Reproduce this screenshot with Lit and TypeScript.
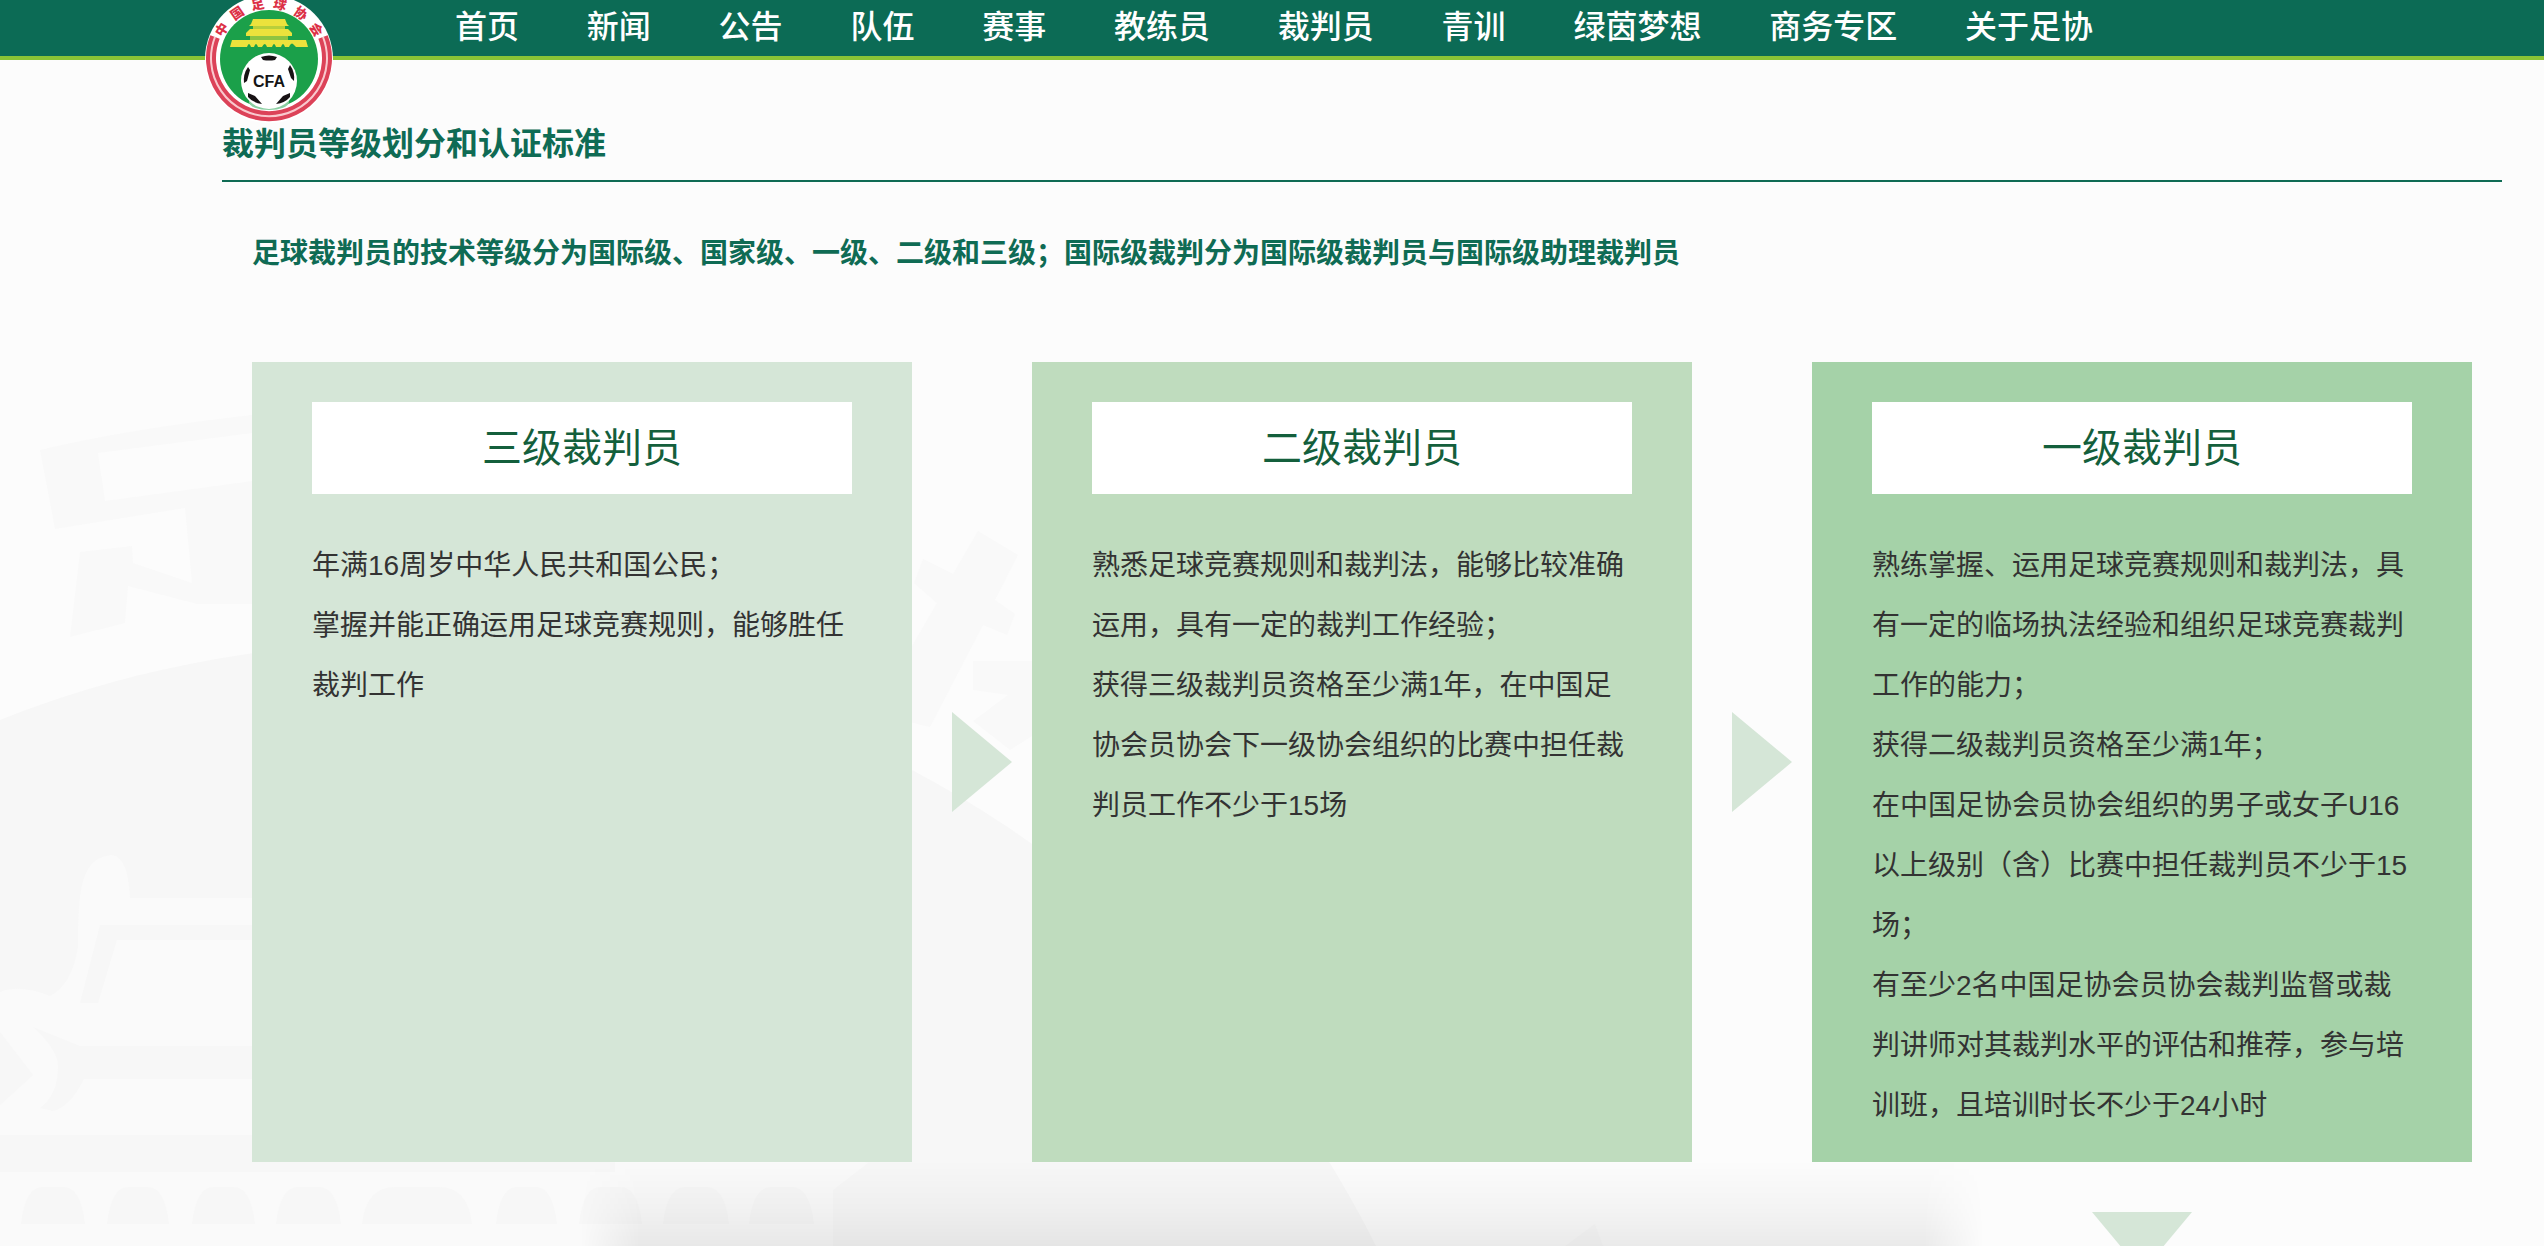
import { LitElement, html, svg, css } from "lit";
import { customElement, property } from "lit/decorators.js";

interface Level {
  name: string;
  tone: string;
  rules: string[];
}

const NAV = ["首页", "新闻", "公告", "队伍", "赛事", "教练员", "裁判员", "青训", "绿茵梦想", "商务专区", "关于足协"];

const LEVELS: Level[] = [
  {
    name: "三级裁判员",
    tone: "light",
    rules: ["年满16周岁中华人民共和国公民；", "掌握并能正确运用足球竞赛规则，能够胜任裁判工作"],
  },
  {
    name: "二级裁判员",
    tone: "medium",
    rules: [
      "熟悉足球竞赛规则和裁判法，能够比较准确运用，具有一定的裁判工作经验；",
      "获得三级裁判员资格至少满1年，在中国足协会员协会下一级协会组织的比赛中担任裁判员工作不少于15场",
    ],
  },
  {
    name: "一级裁判员",
    tone: "strong",
    rules: [
      "熟练掌握、运用足球竞赛规则和裁判法，具有一定的临场执法经验和组织足球竞赛裁判工作的能力；",
      "获得二级裁判员资格至少满1年；",
      "在中国足协会员协会组织的男子或女子U16以上级别（含）比赛中担任裁判员不少于15场；",
      "有至少2名中国足协会员协会裁判监督或裁判讲师对其裁判水平的评估和推荐，参与培训班，且培训时长不少于24小时",
    ],
  },
];

@customElement("cfa-logo")
export class CfaLogo extends LitElement {
  static styles = css`
    :host { display: block; }
    svg { display: block; width: 128px; height: 128px; }
    .ring-text { font: 900 13px "Noto Sans CJK SC", sans-serif; fill: #dc3046; text-anchor: middle; }
    .ball-text { font: bold 16px "Liberation Sans", Arial, sans-serif; fill: #151515; text-anchor: middle; }
  `;

  render() {
    return html`
      <svg viewBox="0 0 128 128" role="img" aria-label="中国足球协会">
        <circle cx="64" cy="64" r="64" fill="#fff" />
        <path d="M10 42 A58 58 0 1 0 118 42" fill="none" stroke="#dc4258" stroke-width="10" />
        <path d="M10 42 A58 58 0 1 0 118 42" fill="none" stroke="#f9c9ce" stroke-width="2" />
        ${["中", "国", "足", "球", "协", "会"].map(
          (ch, i) => svg`<text class="ring-text" x="64" y="13" transform="rotate(${-58 + i * 23.2} 64 64)">${ch}</text>`
        )}
        <circle cx="64" cy="64" r="49" fill="#1ba04a" />
        <g fill="#ece23c">
          <path d="M48 24 L80 24 L82 29 L84 31 L44 31 L46 29 Z" />
          <rect x="48" y="31" width="32" height="3" fill="#b9cf3b" />
          <path d="M45 34 L83 34 L87 38 L87 41 L41 41 L41 38 Z" />
          <rect x="45" y="41" width="38" height="4" fill="#8fc441" />
          <path d="M27 45 L101 45 L103 52 L91 52 L89 50 Q87 47 85 50 L84 52 L80 52 Q78 46 76 52 L71 52 Q69 46 67 52 L62 52 Q60 46 57 52 L53 52 Q51 46 49 52 L46 52 Q44 46 42 52 L25 52 Z" />
        </g>
        <ellipse cx="64" cy="107" rx="20" ry="8" fill="#8bcfa2" />
        <circle cx="64" cy="86" r="28" fill="#fff" />
        <g fill="#171214">
          <path d="M56 62 Q64 59 72 62 L70 65 Q64 66 58 65 Z" />
          <path d="M43 72 Q38 79 39 88 L42 86 L45 75 Z" />
          <path d="M85 70 Q90 77 89 86 L86 83 L83 74 Z" />
          <path d="M43 98 L50 101 L57 109 Q48 108 43 102 Z" />
          <path d="M85 98 L78 101 L71 109 Q80 108 85 102 Z" />
        </g>
        <text class="ball-text" x="64" y="92">CFA</text>
      </svg>
    `;
  }
}

@customElement("site-header")
export class SiteHeader extends LitElement {
  static styles = css`
    :host { display: block; position: relative; z-index: 2; background: #0c6b55; border-bottom: 4px solid #8ac436; }
    .logo { position: absolute; left: 205px; top: -5px; }
    nav { padding-left: 425px; font: 28px/54px "Liberation Sans", Arial, "Noto Sans CJK SC", sans-serif; white-space: nowrap; }
    a {
      display: inline-block;
      padding: 0 30px;
      color: #fff;
      text-decoration: none;
      font-size: 32px;
      font-weight: 500;
    }
  `;

  render() {
    return html`
      <nav aria-label="主导航">${NAV.map((label) => html`<a href="#">${label}</a> `)}</nav>
      <cfa-logo class="logo"></cfa-logo>
    `;
  }
}

@customElement("level-card")
export class LevelCard extends LitElement {
  @property({ attribute: false }) level!: Level;

  static styles = css`
    :host { display: block; flex: 1; min-width: 0; }
    .card { box-sizing: border-box; height: 100%; min-height: 800px; padding: 40px 60px 26px; }
    .light { background: #d5e6d7; }
    .medium { background: #bfdcbe; }
    .strong { background: #a5d2a8; }
    h3 {
      margin: 0 0 42px;
      background: #fff;
      color: #145f3c;
      font-size: 40px;
      line-height: 92px;
      font-weight: 400;
      text-align: center;
    }
    p { margin: 0; color: #333; font-size: 28px; line-height: 60px; }
  `;

  render() {
    return html`
      <article class="card ${this.level.tone}">
        <h3>${this.level.name}</h3>
        ${this.level.rules.map((rule) => html`<p>${rule}</p>`)}
      </article>
    `;
  }
}

@customElement("page-watermark")
export class PageWatermark extends LitElement {
  static styles = css`
    :host { display: block; }
    svg { display: block; width: 1700px; height: 1300px; }
  `;

  render() {
    const arches = [
      [21, 85], [107, 169], [192, 255], [276, 341], [362, 472],
      [496, 557], [579, 642], [663, 729], [749, 814],
    ];
    return html`
      <svg viewBox="0 0 1700 1300" aria-hidden="true">
        <g fill="#f9f9f9">
          <path fill-rule="evenodd" d="M40 450 Q145 425 300 410 V604 H197 L128 586 L125 623 L70 637 L80 552 L132 546 L133 563 L192 583 L185 508 L55 529 Z M98 453 L105 501 L260 480 V432 Z" />
          <path d="M914 583 L923 559 L953 574 L978 531 L1018 555 L995 600 L1015 614 L1007 635 L983 625 L930 727 L880 715 L912 646 L937 603 Z" />
          <path d="M973 661 H1060 V730 L1032 736 L1010 750 L973 721 L1008 695 L973 690 Z" />
          <path d="M1540 1265 L1595 1224 L1610 1265 Z" />
        </g>
        <circle cx="402" cy="1731" r="1088" fill="#f7f7f7" />
        <path fill="#fafafa" d="M0 992 Q20 984 50 996 Q72 985 78 947 C78 885 82 858 112 855 Q128 857 130 898 H700 V1120 L868 1163 L833 1190 V1300 H0 Z" />
        <g fill="#f7f7f7">
          <path d="M100 925 H300 V940 H117 L98 1003 H80 Z" />
          <path d="M33 1027 L80 1046 H300 V1079 H84 Q70 1107 53 1111 L40 1108 Q58 1095 58 1066 Q58 1050 33 1027 Z" />
          <path d="M0 1032 L33 1075 L0 1105 Z" />
          <rect x="0" y="1135" width="615" height="37" />
          ${arches.map(([a, b]) => {
            const q = (b - a) / 4;
            return svg`<path d="M${a} 1224 Q${a + 4} 1187 ${a + q + 6} 1187 H${b - q - 6} Q${b - 4} 1187 ${b} 1224 Z" />`;
          })}
        </g>
      </svg>
    `;
  }
}

@customElement("app-root")
export class AppRoot extends LitElement {
  static styles = css`
    :host {
      display: block;
      position: relative;
      height: 100vh;
      overflow: hidden;
      background: #fcfcfc;
      font-family: "Liberation Sans", Arial, "Noto Sans CJK SC", sans-serif;
    }
    .watermark { position: absolute; left: 0; top: 0; }
    .shade {
      position: absolute;
      left: 580px;
      right: 560px;
      bottom: 0;
      height: 86px;
      background: linear-gradient(to top, rgba(0, 0, 0, 0.07), rgba(0, 0, 0, 0.03) 45%, transparent);
      -webkit-mask-image: linear-gradient(to right, transparent, #000 60px calc(100% - 60px), transparent);
      mask-image: linear-gradient(to right, transparent, #000 60px calc(100% - 60px), transparent);
    }
    main { position: relative; padding: 60px 42px 0 222px; }
    h1 {
      margin: 0;
      padding: 0 0 12px;
      border-bottom: 2px solid #0f6b54;
      color: #0f6b54;
      font-size: 32px;
      line-height: 48px;
      font-weight: 700;
    }
    .body { padding: 42px 30px 0; }
    h2 { margin: 0 0 78px; color: #0f6b54; font-size: 28px; line-height: 60px; font-weight: 700; }
    .levels { display: flex; align-items: stretch; }
    .next {
      box-sizing: border-box;
      display: flex;
      flex: none;
      width: 120px;
      padding-right: 20px;
      align-items: center;
      justify-content: flex-end;
    }
    .next svg { display: block; width: 60px; height: 100px; fill: #d5e6d7; }
    .down { display: flex; margin-top: 50px; justify-content: flex-end; }
    .down svg { display: block; width: 100px; height: 60px; margin-right: 280px; fill: #d5e6d7; }
  `;

  render() {
    return html`
      <page-watermark class="watermark"></page-watermark>
      <site-header></site-header>
      <main>
        <h1>裁判员等级划分和认证标准</h1>
        <div class="body">
          <h2>足球裁判员的技术等级分为国际级、国家级、一级、二级和三级；国际级裁判分为国际级裁判员与国际级助理裁判员</h2>
          <div class="levels">
            ${LEVELS.map(
              (level, i) => html`
                ${i ? html`<div class="next"><svg viewBox="0 0 60 100" aria-hidden="true"><path d="M0 0 L60 50 L0 100 Z" /></svg></div>` : ""}
                <level-card .level=${level}></level-card>
              `
            )}
          </div>
          <div class="down"><svg viewBox="0 0 100 60" aria-hidden="true"><path d="M0 0 H100 L50 60 Z" /></svg></div>
        </div>
      </main>
      <div class="shade"></div>
    `;
  }
}
